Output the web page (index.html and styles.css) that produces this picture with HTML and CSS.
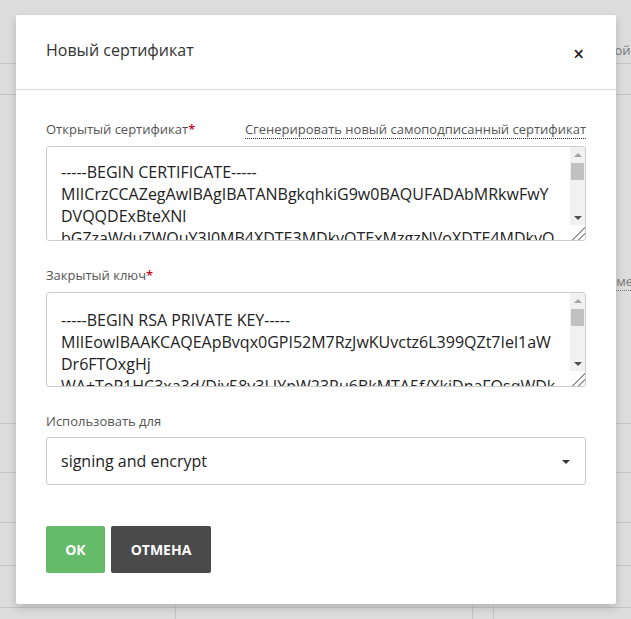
FILE: index.html
```html
<!DOCTYPE html>
<html lang="ru">
<head>
    <meta charset="UTF-8">
    <title>Новый сертификат</title>
    <link rel="stylesheet" href="styles.css">
</head>
<body>
<div class="page">
    <span class="bg-text login">Войти</span>
    <span class="bg-line" style="top: 63px"></span>
    <span class="bg-line" style="top: 94px"></span>
    <span class="bg-text more">Изменить</span>
    <span class="bg-line" style="top: 423px"></span>
    <span class="bg-line" style="top: 472px"></span>
    <span class="bg-line" style="top: 522px"></span>
    <span class="bg-line" style="top: 565px"></span>
    <span class="bg-line" style="top: 607px"></span>
    <span class="bg-col" style="left: 175px"></span>
    <span class="bg-col" style="left: 472px"></span>
    <span class="bg-col" style="left: 493px"></span>
</div>

<div class="modal">
    <div class="modal-header">
        <h4 class="modal-title">Новый сертификат</h4>
        <button type="button" class="close">&times;</button>
    </div>
    <div class="modal-body">
        <div class="field">
            <div class="field-head">
                <label>Открытый сертификат<span class="req">*</span></label>
                <a class="generate">Сгенерировать новый самоподписанный сертификат</a>
            </div>
            <div class="input area-box">
                <textarea class="area">-----BEGIN CERTIFICATE-----
MIICrzCCAZegAwIBAgIBATANBgkqhkiG9w0BAQUFADAbMRkwFwYDVQQDExBteXNl
bGZzaWduZWQuY3J0MB4XDTE3MDkyOTExMzgzNVoXDTE4MDkyOTExMzgzNVowGzEZ
MBcGA1UEAxMQbXlzZWxmc2lnbmVkLmNydDCCASIwDQYJKoZIhvcNAQEBBQADggEP
ADCCAQoCggEBAKQb6sdBjyOdjO0cycClL3Lc+i9/fUGbeyHpdWlg6/RUzsYB41gP
k6D9Rwt8Wt3f4gr+fL9yyGKVtt0bugZDEwOX/15Ig52hTrKlg5EN538sWMwNW3tk
-----END CERTIFICATE-----</textarea>
                <div class="scrollbar">
                    <span class="sb-btn"><i class="arrow up"></i></span>
                    <span class="sb-track"><i class="sb-thumb"></i></span>
                    <span class="sb-btn"><i class="arrow down"></i></span>
                </div>
                <span class="resizer"></span>
            </div>
        </div>

        <div class="field">
            <div class="field-head">
                <label>Закрытый ключ<span class="req">*</span></label>
            </div>
            <div class="input area-box">
                <textarea class="area key">-----BEGIN RSA PRIVATE KEY-----
MIIEowIBAAKCAQEApBvqx0GPI52M7RzJwKUvctz6L399QZt7Iel1aWDr6FTOxgHj
WA+ToP1HC3xa3d/Div58v3LIYpW23Ru6BkMTA5f/XkiDnaFOsqWDkQ3nT8xYzA1b
e2Q9vR4fJ0sLwN7cK1pHhUa6GmXtZ8oYbV3iS5dEqCrMz0nWlTyA4uPjFgIkO2Rx
Hc7Lq0dY3mVbN9wTfR2sKpXeA6uGi1jZoW4yC8nDtMv5hQrE0lBaUx7gIsFkJ3Pm
-----END RSA PRIVATE KEY-----</textarea>
                <div class="scrollbar">
                    <span class="sb-btn"><i class="arrow up"></i></span>
                    <span class="sb-track"><i class="sb-thumb"></i></span>
                    <span class="sb-btn"><i class="arrow down"></i></span>
                </div>
                <span class="resizer"></span>
            </div>
        </div>

        <div class="field">
            <div class="field-head">
                <label>Использовать для</label>
            </div>
            <div class="input select">
                <span>signing and encrypt</span>
                <span class="caret"></span>
            </div>
        </div>

        <div class="actions">
            <button type="button" class="btn ok">ОК</button>
            <button type="button" class="btn cancel">ОТМЕНА</button>
        </div>
    </div>
</div>
</body>
</html>
```

FILE: styles.css
```css
* {
  box-sizing: border-box;
}

body {
  margin: 0;
  height: 619px;
  overflow: hidden;
  background-color: #dddddd;
  font-family: "Open Sans", "Noto Sans", sans-serif;
  color: #333;
}

.page {
  position: absolute;
  top: 0;
  left: 0;
  width: 631px;
  height: 619px;
  overflow: hidden;
}

.bg-text {
  position: absolute;
  font-size: 13px;
  color: #7a7a7a;
  white-space: nowrap;
}

.login {
  left: 606px;
  top: 41px;
}

.more {
  left: 600px;
  top: 273px;
  border-bottom: 1px dotted #777;
  line-height: 17px;
}

.bg-line {
  position: absolute;
  left: 0;
  width: 631px;
  height: 1px;
  background-color: #c6c6c6;
}

.bg-col {
  position: absolute;
  top: 600px;
  width: 1px;
  height: 19px;
  background-color: #c6c6c6;
}

.modal {
  position: relative;
  margin: 15px 0 0 16px;
  width: 600px;
  height: 589px;
  background-color: #fff;
  border-radius: 2px;
  box-shadow: 0 4px 10px rgba(0, 0, 0, 0.18);
}

.modal-header {
  display: flex;
  align-items: center;
  justify-content: space-between;
  height: 75px;
  padding: 0 30px;
  border-bottom: 1px solid #dedede;
}

.modal-title {
  margin: 0 0 4px 0;
  font-size: 16px;
  font-weight: 400;
  color: #333;
}

.close {
  padding: 0;
  margin-top: 4px;
  margin-right: 2px;
  border: none;
  background: none;
  font-family: "Open Sans", sans-serif;
  font-size: 19px;
  font-weight: 600;
  line-height: 1;
  color: #222;
}

.modal-body {
  padding: 30px 30px 0 30px;
}

.field {
  margin-bottom: 25px;
}

.field-head {
  display: flex;
  justify-content: space-between;
  align-items: flex-start;
  height: 18px;
  margin-bottom: 8px;
  font-size: 13px;
  line-height: 18px;
  color: #555;
}

.req {
  color: #d0021b;
  font-weight: 600;
}

.generate {
  color: #555;
  border-bottom: 1px dotted #333;
}

.input {
  display: block;
  width: 540px;
  border: 1px solid #cccccc;
  border-radius: 3px;
  background-color: #fff;
  font-family: "Open Sans", "Noto Sans", sans-serif;
  font-size: 16px;
  color: #222;
}

.area-box {
  position: relative;
  height: 95px;
  overflow: hidden;
}

.area {
  display: block;
  width: 100%;
  height: 100%;
  margin: 0;
  padding: 14px 28px 0 14px;
  border: none;
  resize: none;
  overflow: hidden;
  outline: none;
  background: transparent;
  font-family: inherit;
  font-size: 16px;
  line-height: 22px;
  color: #222;
}

.key {
  padding-top: 16px;
}

/* the textarea's own scrollbar, drawn by hand */
.scrollbar {
  position: absolute;
  top: 0;
  right: 0;
  bottom: 15px;
  width: 15px;
  display: flex;
  flex-direction: column;
  background-color: #f1f1f1;
}

.sb-btn {
  display: flex;
  align-items: center;
  justify-content: center;
  height: 15px;
}

.sb-track {
  flex: 1;
  padding: 1px 1px 0 1px;
}

.sb-thumb {
  display: block;
  height: 17px;
  background-color: #c1c1c1;
}

.arrow {
  width: 0;
  height: 0;
  border-left: 4px solid transparent;
  border-right: 4px solid transparent;
}

.up {
  border-bottom: 4px solid #a3a3a3;
}

.down {
  border-top: 4px solid #505050;
}

.resizer {
  position: absolute;
  right: 0;
  bottom: 0;
  width: 15px;
  height: 15px;
  background: linear-gradient(135deg, transparent 0 56%, #9a9a9a 56% 62%, transparent 62% 76%, #9a9a9a 76% 82%, transparent 82%);
}

.select {
  display: flex;
  align-items: center;
  justify-content: space-between;
  height: 48px;
  padding: 0 15px 0 14px;
  margin-top: -1px;
}

.caret {
  width: 0;
  height: 0;
  border-left: 4px solid transparent;
  border-right: 4px solid transparent;
  border-top: 4px solid #333;
  margin-top: 2px;
}

.actions {
  display: flex;
  gap: 6px;
  padding-top: 16px;
}

.btn {
  height: 47px;
  border: none;
  border-radius: 2px;
  font-family: "Open Sans", sans-serif;
  font-size: 14px;
  font-weight: 700;
  color: #fff;
}

.ok {
  width: 59px;
  background-color: #66bb6a;
}

.cancel {
  width: 100px;
  background-color: #4a4a4a;
}
```
